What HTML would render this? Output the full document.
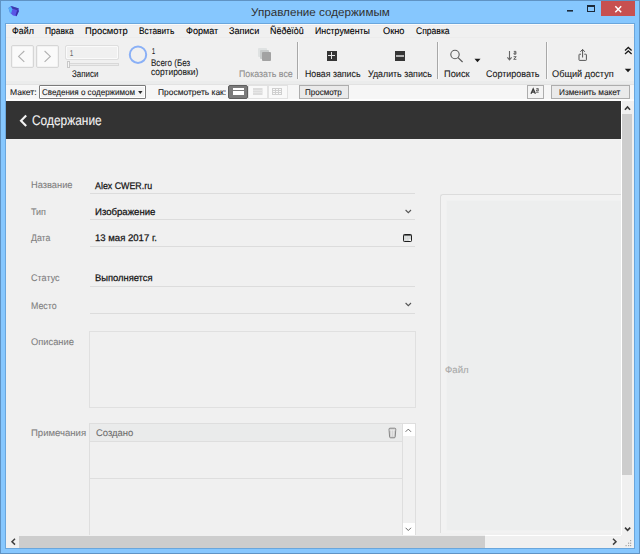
<!DOCTYPE html>
<html><head><meta charset="utf-8"><style>
html,body{margin:0;padding:0;}
body{width:640px;height:554px;position:relative;overflow:hidden;background:#86c7fe;font-family:"Liberation Sans",sans-serif;}
.a{position:absolute;box-sizing:border-box;}
.t{position:absolute;text-rendering:geometricPrecision;-webkit-text-stroke:0.1px currentColor;white-space:nowrap;transform-origin:0 0;font-family:"Liberation Sans",sans-serif;}
svg{position:absolute;overflow:visible;}

</style></head><body>
<!-- window frame -->
<div class="a" style="left:0;top:0;width:640px;height:554px;border:1px solid #5f93c4;"></div>
<div class="a" style="left:5px;top:23px;width:630px;height:526px;border:1px solid #6aa6dc;"></div>
<!-- app icon -->
<svg style="left:0;top:0" width="40" height="24">
  <polygon points="8.5,8 11,6 18.8,8.6 19,11 16.5,16.3 13,15.6 10,12.8" fill="#5a55e6"/>
  <polygon points="8.5,8 11,6.3 12.3,9.2 11.2,13.2 10,12.8" fill="#4fb2f4"/>
  <polygon points="11,6 18.8,8.6 17.2,10.2 12.2,8.4" fill="#3b3aa8"/>
  <polygon points="17.2,10 19,10.8 16.5,16.3 15.6,15" fill="#3a2fa8"/>
</svg>
<!-- close / max / min -->
<div class="a" style="left:601px;top:1px;width:34px;height:15px;background:#c75050;"></div>
<svg style="left:0;top:0" width="640" height="24">
  <path d="M615.3 6.3 L621.2 12.2 M621.2 6.3 L615.3 12.2" stroke="#fff" stroke-width="1.5"/>
  <rect x="587.5" y="5.5" width="7" height="6" fill="none" stroke="#1c2a3a" stroke-width="1"/>
  <rect x="587.5" y="5.5" width="7" height="1.5" fill="#1c2a3a"/>
  <rect x="567" y="10" width="6" height="1.6" fill="#1c2a3a"/>
</svg>
<!-- client -->
<div class="a" style="left:6px;top:24px;width:628px;height:524px;background:#f0f0f0;"></div>
<!-- menu bar -->
<div class="a" style="left:6px;top:24px;width:628px;height:14px;background:#f0f0f0;border-top:1px solid #fcfbf8;border-bottom:1px solid #ececec;"></div>
<div class="a" style="left:6px;top:25px;width:628px;height:1px;background:#ebebf0;"></div>
<!-- toolbar bottom band -->
<div class="a" style="left:6px;top:81px;width:628px;height:3px;background:#ebecec;"></div>
<div class="a" style="left:6px;top:84px;width:628px;height:1px;background:#e2e2e2;"></div>
<!-- layout bar -->
<div class="a" style="left:6px;top:85px;width:628px;height:14px;background:#f6f6f6;"></div>
<div class="a" style="left:6px;top:99px;width:628px;height:2px;background:#fdfdfd;"></div>

<!-- nav buttons -->
<div class="a" style="left:11px;top:45px;width:23px;height:23px;background:#fafafa;border:1px solid #d6d6d6;border-radius:2px;box-shadow:inset 0 0 0 1px #f2f2f2;"></div>
<div class="a" style="left:36px;top:45px;width:23px;height:23px;background:#fafafa;border:1px solid #d6d6d6;border-radius:2px;box-shadow:inset 0 0 0 1px #f2f2f2;"></div>
<svg style="left:0;top:0" width="80" height="80">
  <path d="M24.3 51 L18.6 56.4 L24.3 61.8" fill="none" stroke="#b0b0b0" stroke-width="1.1"/>
  <path d="M44.6 51 L50.3 56.4 L44.6 61.8" fill="none" stroke="#b0b0b0" stroke-width="1.1"/>
</svg>
<!-- record field + slider -->
<div class="a" style="left:65px;top:45px;width:54px;height:15px;border:1px solid #dedede;border-radius:2px;background:#f0f0f0;box-shadow:inset 0 0 0 1px #fafafa;"></div>
<div class="a" style="left:67px;top:63px;width:52px;height:3px;border:1px solid #d8d8d8;background:#ebebeb;"></div>
<div class="a" style="left:67px;top:61px;width:3px;height:7px;border:1px solid #c8c8c8;background:#f6f6f6;"></div>
<!-- circle -->
<svg style="left:0;top:0" width="200" height="80">
  <circle cx="138" cy="54.7" r="8.2" fill="none" stroke="#8ab0f6" stroke-width="2"/>
</svg>
<!-- show all icon -->
<svg style="left:0;top:0" width="300" height="80">
  <rect x="258" y="48" width="9" height="9" rx="1" fill="#dfe2e2"/>
  <rect x="260" y="50" width="9" height="9" rx="1" fill="#c9cccc"/>
  <rect x="262" y="52" width="9" height="9" rx="1" fill="#a2a2a2"/>
</svg>
<!-- separators -->
<div class="a" style="left:297px;top:42px;width:1px;height:37px;background:#a8a8a8;box-shadow:1px 0 0 #f9f9f9;"></div>
<div class="a" style="left:437px;top:42px;width:1px;height:37px;background:#a8a8a8;box-shadow:1px 0 0 #f9f9f9;"></div>
<div class="a" style="left:546px;top:42px;width:1px;height:37px;background:#a8a8a8;box-shadow:1px 0 0 #f9f9f9;"></div>
<!-- plus / minus -->
<svg style="left:0;top:0" width="640" height="100">
  <rect x="327" y="51" width="10" height="10" fill="#353535"/>
  <path d="M331.5 52 V59 M328 55.5 H335" stroke="#e6e6e6" stroke-width="1"/>
  <rect x="395" y="51" width="10" height="10" fill="#353535"/>
  <path d="M396 56 H404" stroke="#dcdcdc" stroke-width="1.5"/>
  <!-- search -->
  <circle cx="455" cy="54.5" r="4.2" fill="none" stroke="#5a5a5a" stroke-width="1.1"/>
  <path d="M458 57.6 L462.6 62" stroke="#5a5a5a" stroke-width="1.2"/>
  <path d="M474.5 58.8 L480.5 58.8 L477.5 62.2 Z" fill="#1a1a1a"/>
  <!-- sort -->
  <path d="M509.5 51 V59.5 M507.4 57.3 L509.5 59.8 L511.6 57.3" fill="none" stroke="#666" stroke-width="1.1"/>
  <path d="M513.8 51.4 H515.9 V54.2 H514 V52.9 H515.9" fill="none" stroke="#555" stroke-width="0.9"/>
  <path d="M513.6 56.7 H516.2 L513.7 59.3 H516.4" fill="none" stroke="#555" stroke-width="0.9"/>
  <!-- share -->
  <path d="M581 54.2 H579.6 Q579 54.2 579 54.8 V59.8 Q579 60.4 579.6 60.4 H585.8 Q586.4 60.4 586.4 59.8 V54.8 Q586.4 54.2 585.8 54.2 H584.3" fill="none" stroke="#555" stroke-width="1"/>
  <path d="M582.6 57.5 V49.5 M580.4 51.8 L582.6 49.4 L584.8 51.8" fill="none" stroke="#555" stroke-width="1"/>
  <!-- chevrons right -->
  <path d="M625 50.5 L628.3 47.5 L631.6 50.5 M625 54 L628.3 51 L631.6 54" fill="none" stroke="#1a1a1a" stroke-width="1.3"/>
  <path d="M624.8 68.8 L631.2 68.8 L628 72.2 Z" fill="#1a1a1a"/>
</svg>

<!-- layout bar controls -->
<div class="a" style="left:39px;top:85px;width:107px;height:14px;background:#f3f3f3;border:1px solid #7a7a7a;border-radius:1px;box-shadow:inset 0 0 0 1px #fff;"></div>
<svg style="left:0;top:0" width="640" height="110">
  <path d="M138.1 91 L142.5 91 L140.3 94 Z" fill="#2a2a2a"/>
</svg>
<div class="a" style="left:228px;top:85px;width:20px;height:14px;background:#7b7b7b;border:1px solid #5e5e5e;border-radius:2px;"></div>
<div class="a" style="left:233px;top:88px;width:11px;height:7px;background:#fff;"></div>
<div class="a" style="left:233px;top:90px;width:11px;height:1px;background:#7b7b7b;"></div>
<div class="a" style="left:248px;top:85px;width:20px;height:14px;background:#f9f9f9;border:1px solid #e2e2e2;"></div>
<div class="a" style="left:268px;top:85px;width:20px;height:14px;background:#f9f9f9;border:1px solid #e2e2e2;"></div>
<svg style="left:0;top:0" width="640" height="110">
  <rect x="253" y="88" width="9.5" height="7" fill="#dcdcdc"/>
  <path d="M253 90.5 H262.5 M253 92.5 H262.5" stroke="#e9e9e9" stroke-width="0.8"/>
  <rect x="272.5" y="88.5" width="9" height="6" fill="none" stroke="#cfcfcf" stroke-width="1"/>
  <path d="M272.5 90.5 H281.5 M272.5 92.5 H281.5 M275.5 88.5 V94.5 M278.5 88.5 V94.5" stroke="#cfcfcf" stroke-width="1"/>
</svg>
<div class="a" style="left:299px;top:85px;width:50px;height:14px;background:#eaeaea;border:1px solid #adadad;"></div>
<div class="a" style="left:527px;top:85px;width:17px;height:14px;background:#f4f4f4;border:1px solid #adadad;"></div>
<svg style="left:0;top:0" width="640" height="110">
  <path d="M531 93.8 L533.2 88.9 L535.4 93.8 M531.8 92.2 H534.6" fill="none" stroke="#3c3c3c" stroke-width="1.3"/>
  <path d="M536.3 88.5 H538.3 V91 H536.5 V89.9 H538.3 M536 92.3 H538.7" fill="none" stroke="#555" stroke-width="0.8"/>
</svg>
<div class="a" style="left:551px;top:85px;width:79px;height:14px;background:#eaeaea;border:1px solid #adadad;"></div>

<!-- dark header -->
<div class="a" style="left:6px;top:101px;width:615px;height:38px;background:#333333;"></div>
<svg style="left:0;top:0" width="640" height="140">
  <path d="M26.2 115.5 L21 120.7 L26.2 125.9" fill="none" stroke="#f4f4f4" stroke-width="2.1"/>
</svg>

<!-- right panel -->
<div class="a" style="left:440px;top:194px;width:181px;height:339px;border:1px solid #dcdcdc;border-bottom:none;border-right:none;border-radius:3px 0 0 0;background:#f2f2f2;"></div>
<div class="a" style="left:446px;top:200px;width:175px;height:331px;background:#edeeee;border:1px solid #f0f1f1;border-right:none;"></div>
<!-- vertical scrollbar -->
<div class="a" style="left:621px;top:101px;width:13px;height:434px;background:#f0f0f0;"></div>
<div class="a" style="left:622px;top:114px;width:10px;height:361px;background:#cdcdcd;"></div>
<svg style="left:0;top:0" width="640" height="554">
  <path d="M624.9 109.8 L627.5 107 L630.1 109.8" fill="none" stroke="#3a3a3a" stroke-width="1.6"/>
  <path d="M625 527.6 L627.6 530.3 L630.2 527.6" fill="none" stroke="#3a3a3a" stroke-width="1.6"/>
</svg>
<!-- horizontal scrollbar -->
<div class="a" style="left:6px;top:535px;width:615px;height:13px;background:#f0f0f0;"></div>
<div class="a" style="left:485px;top:535px;width:136px;height:1px;background:#fff;"></div>
<div class="a" style="left:19px;top:536px;width:466px;height:12px;background:#cdcdcd;"></div>
<svg style="left:0;top:0" width="640" height="554">
  <path d="M15 538.8 L12 541.7 L15 544.6" fill="none" stroke="#404040" stroke-width="1.5"/>
  <path d="M613 538.8 L616 541.7 L613 544.6" fill="none" stroke="#404040" stroke-width="1.5"/>
  <g fill="#a4a4a4">
    <rect x="630" y="540" width="1.2" height="1.2"/>
    <rect x="628" y="542.6" width="1.2" height="1.2"/><rect x="630" y="542.6" width="1.2" height="1.2"/>
    <rect x="625.5" y="545" width="1.2" height="1.2"/><rect x="628" y="545" width="1.2" height="1.2"/><rect x="630" y="545" width="1.2" height="1.2"/>
  </g>
</svg>
<div class="a" style="left:621px;top:101px;width:1px;height:434px;background:#fff;"></div>

<!-- form fields underline -->
<div class="a" style="left:90px;top:193px;width:325px;height:1px;background:#dcdcdc;"></div>
<div class="a" style="left:90px;top:219px;width:325px;height:1px;background:#dcdcdc;"></div>
<div class="a" style="left:90px;top:246px;width:325px;height:1px;background:#dcdcdc;"></div>
<div class="a" style="left:90px;top:286px;width:325px;height:1px;background:#dcdcdc;"></div>
<div class="a" style="left:90px;top:313px;width:325px;height:1px;background:#dcdcdc;"></div>
<svg style="left:0;top:0" width="640" height="554">
  <path d="M405.6 210 L408.3 212.7 L411 210" fill="none" stroke="#555" stroke-width="1.1"/>
  <path d="M405.6 303 L408.3 305.7 L411 303" fill="none" stroke="#555" stroke-width="1.1"/>
</svg>
<svg style="left:0;top:0" width="640" height="300">
  <rect x="403.5" y="234.5" width="8" height="7" rx="0.8" fill="#d3d6d6" stroke="#1e1e1e" stroke-width="1"/>
  <path d="M404 235.3 H411" stroke="#1e1e1e" stroke-width="0.7"/>
  <path d="M406.3 236 V241 M408.8 236 V241 M404 237.8 H411 M404 239.6 H411" stroke="#e6e8e8" stroke-width="0.5"/>
  <rect x="409.2" y="239.4" width="1.8" height="1.6" fill="#fafafa"/>
</svg>
<!-- textarea -->
<div class="a" style="left:89px;top:331px;width:327px;height:77px;border:1px solid #e0e0e0;"></div>
<!-- portal -->
<div class="a" style="left:89px;top:423px;width:327px;height:112px;border:1px solid #dedede;border-bottom:none;"></div>
<div class="a" style="left:90px;top:424px;width:312px;height:18px;background:#eaebeb;border-bottom:1px solid #dedede;border-radius:0 3px 0 0;"></div>
<div class="a" style="left:90px;top:478px;width:312px;height:1px;background:#dedede;"></div>
<div class="a" style="left:402px;top:424px;width:13px;height:111px;background:#f0f0f0;border-left:1px solid #dedede;"></div>
<div class="a" style="left:403px;top:424px;width:12px;height:12px;background:#fff;"></div>
<div class="a" style="left:403px;top:523px;width:12px;height:12px;background:#fff;"></div>
<svg style="left:0;top:0" width="640" height="554">
  <path d="M405.6 431.8 L408.3 429.1 L411 431.8" fill="none" stroke="#5a5a5a" stroke-width="0.9"/>
  <path d="M405.6 527.8 L408.3 530.5 L411 527.8" fill="none" stroke="#5a5a5a" stroke-width="0.9"/>
  <!-- trash -->
  <path d="M389 429.2 Q389 428.2 390 428.2 H394.8 Q395.8 428.2 395.8 429.2 L395.2 436.9 Q395.1 437.8 394.2 437.8 H390.6 Q389.7 437.8 389.6 436.9 Z" fill="#d4d4d4" stroke="#7c7c7c" stroke-width="0.9"/>
  <path d="M391.4 430 V436.5 M393.4 430 V436.5 M389.5 430.2 H395.3" stroke="#f2f2f2" stroke-width="0.6"/>
</svg>
<!-- right panel -->


<div class='t' style='left:250.50px;top:8.35px;font-size:11.4px;line-height:11.4px;color:#303030;font-weight:400;transform:scaleX(1.0241);-webkit-text-stroke:0'>Управление содержимым</div>
<div class='t' style='left:11.70px;top:26.87px;font-size:9.6px;line-height:9.6px;color:#000;font-weight:400;transform:scaleX(0.9261);'>Файл</div>
<div class='t' style='left:45.00px;top:26.87px;font-size:9.6px;line-height:9.6px;color:#000;font-weight:400;transform:scaleX(0.8848);'>Правка</div>
<div class='t' style='left:85.20px;top:26.87px;font-size:9.6px;line-height:9.6px;color:#000;font-weight:400;transform:scaleX(0.9750);'>Просмотр</div>
<div class='t' style='left:139.30px;top:26.87px;font-size:9.6px;line-height:9.6px;color:#000;font-weight:400;transform:scaleX(0.8659);'>Вставить</div>
<div class='t' style='left:186.00px;top:26.87px;font-size:9.6px;line-height:9.6px;color:#000;font-weight:400;transform:scaleX(0.9441);'>Формат</div>
<div class='t' style='left:229.00px;top:26.87px;font-size:9.6px;line-height:9.6px;color:#000;font-weight:400;transform:scaleX(0.9500);'>Записи</div>
<div class='t' style='left:270.20px;top:26.87px;font-size:9.6px;line-height:9.6px;color:#000;font-weight:400;transform:scaleX(0.9306);'>Ñëðèïòû</div>
<div class='t' style='left:314.80px;top:26.87px;font-size:9.6px;line-height:9.6px;color:#000;font-weight:400;transform:scaleX(0.9167);'>Инструменты</div>
<div class='t' style='left:383.20px;top:26.87px;font-size:9.6px;line-height:9.6px;color:#000;font-weight:400;transform:scaleX(0.9591);'>Окно</div>
<div class='t' style='left:415.80px;top:26.87px;font-size:9.6px;line-height:9.6px;color:#000;font-weight:400;transform:scaleX(0.8921);'>Справка</div>
<div class='t' style='left:71.80px;top:69.87px;font-size:9.6px;line-height:9.6px;color:#1a1a1a;font-weight:400;transform:scaleX(0.8281);'>Записи</div>
<div class='t' style='left:238.80px;top:69.87px;font-size:9.6px;line-height:9.6px;color:#8e8e8e;font-weight:400;transform:scaleX(0.9172);'>Показать все</div>
<div class='t' style='left:305.00px;top:69.87px;font-size:9.6px;line-height:9.6px;color:#1a1a1a;font-weight:400;transform:scaleX(0.9167);'>Новая запись</div>
<div class='t' style='left:367.75px;top:69.87px;font-size:9.6px;line-height:9.6px;color:#1a1a1a;font-weight:400;transform:scaleX(0.9203);'>Удалить запись</div>
<div class='t' style='left:443.75px;top:69.87px;font-size:9.6px;line-height:9.6px;color:#1a1a1a;font-weight:400;transform:scaleX(0.9648);'>Поиск</div>
<div class='t' style='left:486.25px;top:69.87px;font-size:9.6px;line-height:9.6px;color:#1a1a1a;font-weight:400;transform:scaleX(0.9325);'>Сортировать</div>
<div class='t' style='left:552.00px;top:69.87px;font-size:9.6px;line-height:9.6px;color:#1a1a1a;font-weight:400;transform:scaleX(0.9578);'>Общий доступ</div>
<div class='t' style='left:151.60px;top:46.80px;font-size:8.5px;line-height:8.5px;color:#1a1a1a;font-weight:400;transform:scaleX(0.6400);'>1</div>
<div class='t' style='left:150.80px;top:58.87px;font-size:9.6px;line-height:9.6px;color:#1a1a1a;font-weight:400;transform:scaleX(0.8383);'>Всего (Без</div>
<div class='t' style='left:150.80px;top:67.87px;font-size:9.6px;line-height:9.6px;color:#1a1a1a;font-weight:400;transform:scaleX(0.8811);'>сортировки)</div>
<div class='t' style='left:70.40px;top:48.80px;font-size:8.5px;line-height:8.5px;color:#666666;font-weight:400;transform:scaleX(0.6600);'>1</div>
<div class='t' style='left:9.75px;top:87.89px;font-size:8.4px;line-height:8.4px;color:#1a1a1a;font-weight:400;transform:scaleX(1.0212);'>Макет:</div>
<div class='t' style='left:42.00px;top:87.89px;font-size:8.4px;line-height:8.4px;color:#1a1a1a;font-weight:400;transform:scaleX(0.9588);'>Сведения о содержимом</div>
<div class='t' style='left:157.80px;top:87.89px;font-size:8.4px;line-height:8.4px;color:#1a1a1a;font-weight:400;transform:scaleX(1.0075);'>Просмотреть как:</div>
<div class='t' style='left:304.75px;top:87.89px;font-size:8.4px;line-height:8.4px;color:#1a1a1a;font-weight:400;transform:scaleX(0.9605);'>Просмотр</div>
<div class='t' style='left:558.75px;top:87.89px;font-size:8.4px;line-height:8.4px;color:#1a1a1a;font-weight:400;transform:scaleX(0.9817);'>Изменить макет</div>
<div class='t' style='left:32.30px;top:113.15px;font-size:14px;line-height:14px;color:#f2f2f2;font-weight:400;transform:scaleX(0.8519);-webkit-text-stroke:0.1px currentColor'>Содержание</div>
<div class='t' style='left:30.60px;top:180.87px;font-size:9.6px;line-height:9.6px;color:#7f7f7f;font-weight:400;transform:scaleX(0.9686);'>Название</div>
<div class='t' style='left:30.50px;top:207.87px;font-size:9.6px;line-height:9.6px;color:#7f7f7f;font-weight:400;transform:scaleX(0.9375);'>Тип</div>
<div class='t' style='left:30.50px;top:233.87px;font-size:9.6px;line-height:9.6px;color:#7f7f7f;font-weight:400;transform:scaleX(0.9091);'>Дата</div>
<div class='t' style='left:30.50px;top:273.87px;font-size:9.6px;line-height:9.6px;color:#7f7f7f;font-weight:400;transform:scaleX(0.9417);'>Статус</div>
<div class='t' style='left:30.50px;top:301.87px;font-size:9.6px;line-height:9.6px;color:#7f7f7f;font-weight:400;transform:scaleX(0.9196);'>Место</div>
<div class='t' style='left:30.50px;top:337.87px;font-size:9.6px;line-height:9.6px;color:#7f7f7f;font-weight:400;transform:scaleX(0.9705);'>Описание</div>
<div class='t' style='left:30.60px;top:428.87px;font-size:9.6px;line-height:9.6px;color:#7f7f7f;font-weight:400;transform:scaleX(0.9945);'>Примечания</div>
<div class='t' style='left:445.40px;top:365.87px;font-size:9.6px;line-height:9.6px;color:#a9a9a9;font-weight:400;transform:scaleX(1.0043);'>Файл</div>
<div class='t' style='left:95.00px;top:181.87px;font-size:9.6px;line-height:9.6px;color:#141414;font-weight:400;transform:scaleX(0.9234);-webkit-text-stroke:0.25px currentColor'>Alex CWER.ru</div>
<div class='t' style='left:95.00px;top:207.87px;font-size:9.6px;line-height:9.6px;color:#141414;font-weight:400;transform:scaleX(1.0000);-webkit-text-stroke:0.25px currentColor'>Изображение</div>
<div class='t' style='left:94.50px;top:233.87px;font-size:9.6px;line-height:9.6px;color:#141414;font-weight:400;transform:scaleX(0.9959);-webkit-text-stroke:0.25px currentColor'>13 мая 2017 г.</div>
<div class='t' style='left:94.50px;top:273.87px;font-size:9.6px;line-height:9.6px;color:#141414;font-weight:400;transform:scaleX(0.9746);-webkit-text-stroke:0.25px currentColor'>Выполняется</div>
<div class='t' style='left:95.90px;top:428.87px;font-size:9.6px;line-height:9.6px;color:#6e6e6e;font-weight:400;transform:scaleX(0.9842);'>Создано</div>
</body></html>
